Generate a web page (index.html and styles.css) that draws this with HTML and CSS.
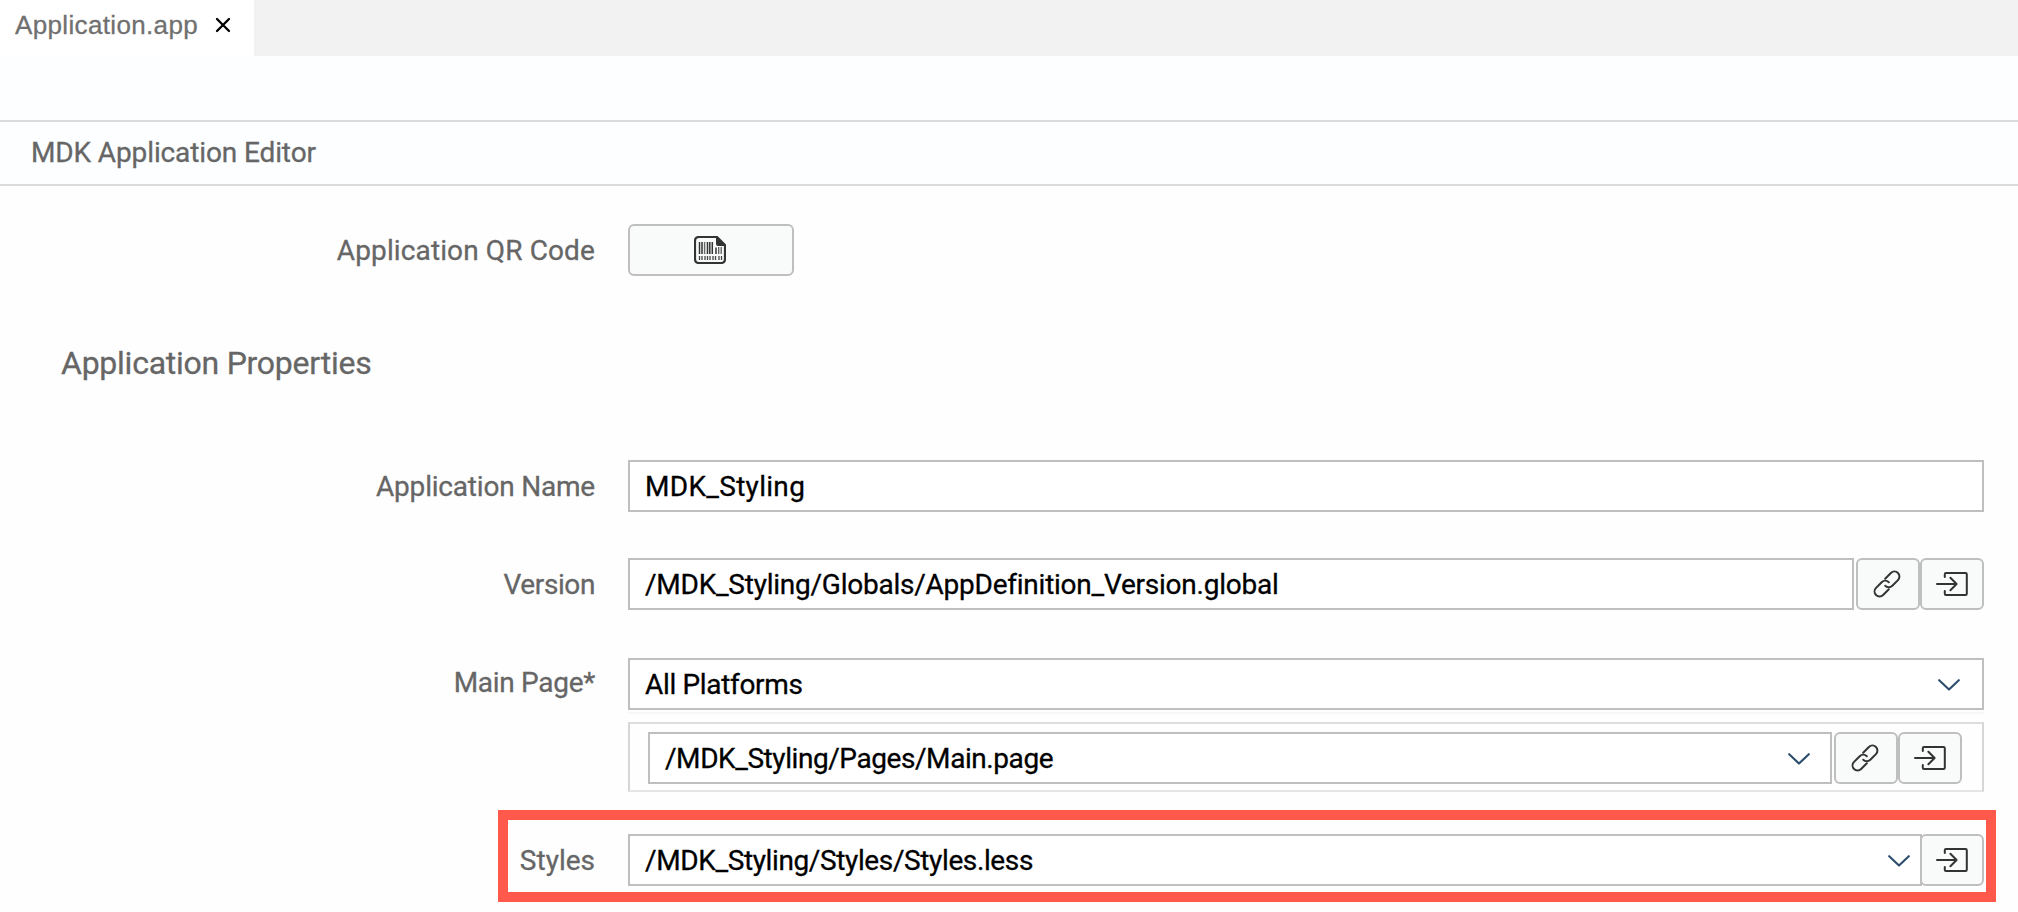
FILE: index.html
```html
<!DOCTYPE html>
<html lang="en">
<head>
<meta charset="utf-8">
<title>MDK Application Editor</title>
<link rel="stylesheet" href="styles.css">
</head>
<body>
<svg class="defs" aria-hidden="true">
  <symbol id="link" viewBox="0 0 32 32">
    <g transform="rotate(-45 16 16)" fill="none" stroke="#333" stroke-width="2" stroke-linecap="round">
      <path d="M13.6 21H5.5A5 5 0 0 1 5.5 11H13.5A5 5 0 0 1 18.5 16"/>
      <path d="M18.4 11H26.5A5 5 0 0 1 26.5 21H18.5A5 5 0 0 1 13.5 16"/>
    </g>
  </symbol>
  <symbol id="open" viewBox="0 0 32 32">
    <path d="M8.8 9V6.2Q8.8 5 10 5H29.6Q30.8 5 30.8 6.2V25.8Q30.8 27 29.6 27H10Q8.8 27 8.8 25.8V23M1 16H20M14.4 9.8L20.6 16L14.4 22.2" fill="none" stroke="#333" stroke-width="2" stroke-linecap="round" stroke-linejoin="round"/>
  </symbol>
  <symbol id="chevron" viewBox="0 0 22 12">
    <path d="M1.2 1.2L11 10.6L20.8 1.2" fill="none" stroke="#2c4d6e" stroke-width="2.1" stroke-linecap="round" stroke-linejoin="round"/>
  </symbol>
</svg>

<div class="tabs">
  <div class="tab"><span class="tab-name">Application.app</span>
    <svg class="close" viewBox="0 0 16 16"><path d="M2 2L14 14M14 2L2 14" stroke="#000" stroke-width="2.3" stroke-linecap="round"/></svg>
  </div>
</div>
<div class="toolbar"></div>
<header class="title"><span class="s-title">MDK Application Editor</span></header>

<main>
  <div class="row row-qr">
    <label class="s-qr">Application QR Code</label>
    <button class="btn btn-qr">
      <svg class="barcode" viewBox="0 0 32 28">
        <path d="M5 1H23L31 9V23Q31 27 27 27H5Q1 27 1 23V5Q1 1 5 1Z" fill="#f9fbfb" stroke="#333" stroke-width="2.2"/>
        <path d="M22 0.5L31.5 10H24Q22 10 22 8Z" fill="#333"/>
        <path d="M5.5 6V18M8 6V18M13.5 6V18M15.8 6V18M18.3 6V18M22 11.5V18" stroke="#333" stroke-width="1.5"/>
        <path d="M10.6 6V18M24.7 11V18M27.2 11V18" stroke="#666" stroke-width="1.4"/>
        <path d="M5.5 20V24M8 20V24M11 20V24M13.5 20V24M16 20V24M19 20V24M21.5 20V24M25 20V24M27.5 20V24" stroke="#444" stroke-width="1.3"/>
      </svg>
    </button>
  </div>

  <h2 class="s-props">Application Properties</h2>

  <div class="row row-name">
    <label class="s-name">Application Name</label>
    <div class="field"><span class="s-styling value-m">MDK_Styling</span></div>
  </div>

  <div class="row row-version">
    <label class="s-ver">Version</label>
    <div class="group">
      <div class="field"><span class="s-global">/MDK_Styling/Globals/AppDefinition_Version.global</span></div>
      <button class="btn"><svg class="icon icon-link"><use href="#link"/></svg></button>
      <button class="btn"><svg class="icon"><use href="#open"/></svg></button>
    </div>
  </div>

  <div class="row row-page">
    <label class="s-page label-page">Main Page*</label>
    <div class="stack">
      <div class="field"><span class="s-all">All Platforms</span><svg class="chevron"><use href="#chevron"/></svg></div>
      <div class="divider"></div>
      <div class="panel">
        <div class="group">
          <div class="field field-page"><span class="s-main">/MDK_Styling/Pages/Main.page</span><svg class="chevron"><use href="#chevron"/></svg></div>
          <button class="btn"><svg class="icon icon-link"><use href="#link"/></svg></button>
          <button class="btn"><svg class="icon"><use href="#open"/></svg></button>
        </div>
      </div>
    </div>
  </div>

  <div class="highlight">
    <label class="label-styles">Styles</label>
    <div class="group joined">
      <div class="field"><span class="s-less">/MDK_Styling/Styles/Styles.less</span><svg class="chevron"><use href="#chevron"/></svg></div>
      <button class="btn"><svg class="icon"><use href="#open"/></svg></button>
    </div>
  </div>
</main>
</body>
</html>
```
FILE: styles.css
```css
* { box-sizing: border-box; }
body {
  margin: 0;
  height: 912px;
  overflow: hidden;
  background: #fefefe;
  color: #666;
  font: 28px/54px Roboto, sans-serif;
  -webkit-text-stroke: 0.3px currentColor;
}
.defs { display: none; }

.tabs { height: 56px; background: #f2f2f2; }
.tab {
  display: flex;
  width: 254px;
  height: 56px;
  padding: 0 0 6px 15px;
  align-items: center;
  background: #fff;
  color: #707070;
  font: 26px/50px "Liberation Sans", Arial, sans-serif;
}
.tab-name { width: 200px; letter-spacing: 0.35px; }
.close { width: 16px; height: 16px; margin-right: 23px; flex: none; }
.toolbar { height: 64px; background: #fcfeff; }
.title {
  height: 66px;
  padding-left: 31px;
  border-top: 2px solid #d9dbdd;
  border-bottom: 2px solid #d9dbdd;
  background: #fcfeff;
  line-height: 62px;
}

.row {
  display: grid;
  grid-template-columns: 595px 1356px;
  column-gap: 33px;
  height: 52px;
}
.row label { text-align: right; }
.row-qr { margin-top: 38px; }
h2 {
  margin: 61px 0 71px 61px;
  font-size: 32px;
  font-weight: 400;
  line-height: 52px;
}
.row-version { margin-top: 46px; }
.row-page { height: 134px; margin-top: 48px; }
.label-page { margin-top: -2px; }

.field {
  display: flex;
  flex: 1;
  height: 52px;
  padding: 0 22px 0 15px;
  justify-content: space-between;
  align-items: center;
  border: 2px solid #bfbfbf;
  background: #fff;
  color: #000;
  line-height: 50px;
  white-space: nowrap;
}
.field span { height: 48px; }
.group { display: flex; }
.btn {
  display: flex;
  width: 64px;
  height: 52px;
  padding: 0;
  align-items: center;
  justify-content: center;
  flex: none;
  border: 2px solid #bfbfbf;
  border-radius: 6px;
  background: #f9fbfb;
}
.field + .btn { margin-left: 2px; }
.btn-qr { width: 166px; }
.barcode { width: 32px; height: 28px; margin-right: 2px; }
.icon { width: 32px; height: 32px; }
.icon-link { margin-left: -2px; }
.chevron { width: 22px; height: 12px; margin-top: 2px; }
.field-page { padding-right: 20px; }

.divider { height: 2px; margin: 2px 0 8px; background: #f7f7f7; }
.panel {
  height: 70px;
  padding: 8px 20px 8px 18px;
  border: 2px solid #d6d6d6;
  border-top-color: #ddd;
  border-bottom-color: #e5e5e5;
}

.highlight {
  display: grid;
  grid-template-columns: 87px 1356px;
  column-gap: 33px;
  width: 1498px;
  height: 92px;
  margin: 18px 0 0 498px;
  padding: 14px 0 0;
  border: 10px solid #ff594c;
}
.label-styles { text-align: right; line-height: 53px; }
.joined .field { margin-right: -2px; padding-right: 10px; }
.joined .field + .btn { margin-left: 0; }

/* Tracking per string */
.s-title { letter-spacing: -0.12px; }
.s-qr { letter-spacing: 0.12px; }
.s-props { letter-spacing: -0.25px; }
.s-name { letter-spacing: -0.2px; }
.s-ver { letter-spacing: -0.4px; }
.s-page { letter-spacing: -0.3px; }
.s-styling { letter-spacing: 0.3px; }
.s-global { letter-spacing: -0.24px; }
.s-all { letter-spacing: -0.33px; }
.s-main { letter-spacing: -0.43px; }
.s-less { letter-spacing: -0.38px; }
```
